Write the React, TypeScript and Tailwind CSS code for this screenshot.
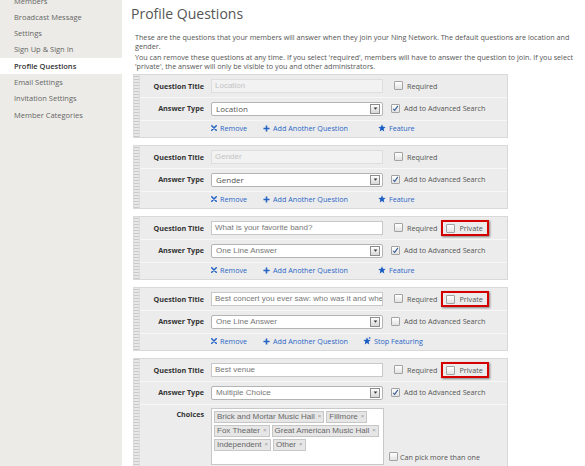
import React from 'react';

const ui = "font-['Open_Sans','DejaVu_Sans',sans-serif]";
const arial = "font-['Liberation_Sans',Arial,sans-serif]";

const nav = [
  'Members',
  'Broadcast Message',
  'Settings',
  'Sign Up & Sign In',
  'Profile Questions',
  'Email Settings',
  'Invitation Settings',
  'Member Categories',
];

type Question = {
  title: string;
  locked?: boolean;
  answer: string;
  search: boolean;
  priv?: boolean;
  featured?: boolean;
  choices?: string[];
};

const questions: Question[] = [
  { title: 'Location', locked: true, answer: 'Location', search: true },
  { title: 'Gender', locked: true, answer: 'Gender', search: true },
  { title: 'What is your favorite band?', answer: 'One Line Answer', search: true, priv: true },
  {
    title: 'Best concert you ever saw: who was it and where',
    answer: 'One Line Answer',
    search: false,
    priv: true,
    featured: true,
  },
  {
    title: 'Best venue',
    answer: 'Multiple Choice',
    search: true,
    priv: true,
    choices: [
      'Brick and Mortar Music Hall',
      'Fillmore',
      'Fox Theater',
      'Great American Music Hall',
      'Independent',
      'Other',
    ],
  },
];

function Check({ checked }: { checked?: boolean }) {
  return (
    <span className="inline-flex h-[9px] w-[9px] shrink-0 items-center justify-center rounded-[1px] border border-[#a3a3a3] bg-gradient-to-b from-white to-[#e2e2e2]">
      {checked && (
        <svg viewBox="0 0 8 8" className="h-[7px] w-[7px]">
          <path d="M1.4 4.3 3.1 6.2 6.7 1" fill="none" stroke="#3b5f95" strokeWidth="1.3" />
        </svg>
      )}
    </span>
  );
}

function XIcon() {
  return (
    <svg viewBox="0 0 8 8" className="h-[6px] w-[6px]">
      <path d="M1 1 7 7M7 1 1 7" stroke="#2563c4" strokeWidth="2" strokeLinecap="round" />
    </svg>
  );
}

function PlusIcon() {
  return (
    <svg viewBox="0 0 8 8" className="h-[7px] w-[7px]">
      <path d="M4 0.5v7M0.5 4h7" stroke="#2563c4" strokeWidth="1.8" />
    </svg>
  );
}

function StarIcon({ sparkle }: { sparkle?: boolean }) {
  return (
    <svg viewBox="0 0 10 10" className="h-[8px] w-[8px]">
      <path
        d="M5 0.4 6.3 3.5 9.6 3.7 7.1 5.9 7.9 9.3 5 7.5 2.1 9.3 2.9 5.9 0.4 3.7 3.7 3.5Z"
        fill="#1f5fc4"
      />
      {sparkle && <path d="M8.3 0v2.4M7.1 1.2h2.4" stroke="#1f5fc4" strokeWidth="0.8" />}
    </svg>
  );
}

function Select({ value, plain }: { value: string; plain?: boolean }) {
  return (
    <div className="flex h-[14px] w-[172px] items-center justify-between rounded-[2px] border border-[#b4b4b4] bg-white pl-[4px] pr-[2px]">
      <span className={`${plain ? ui : arial} text-[8px] ${plain ? 'text-[#555]' : 'text-[#777]'}`}>{value}</span>
      <span className="flex h-[10px] w-[10px] items-center justify-center border border-[#8d8d8d] bg-gradient-to-b from-white to-[#d6d6d6]">
        <svg viewBox="0 0 6 4" className="h-[3px] w-[5px]">
          <path d="M0.5 0.5h5L3 3.5Z" fill="#333" />
        </svg>
      </span>
    </div>
  );
}

function QuestionBox({ q }: { q: Question }) {
  return (
    <div className="flex w-[375px] border border-[#d9d9d9] bg-[#ececec]">
      <div className="w-[6px] shrink-0 border-r border-[#dcdcdc] bg-[repeating-linear-gradient(0deg,#c9c9c9_0_1px,#e8e8e8_1px_3px)]" />
      <div className="flex-1">
        <div className="flex h-[22px] items-center">
          <div className="w-[64px] text-right text-[7.2px] font-bold text-[#333]">Question Title</div>
          <div
            className={`ml-[7px] flex h-[14px] w-[172px] items-center overflow-hidden whitespace-nowrap border pl-[3px] ${arial} text-[8px] ${
              q.locked ? 'border-[#dedede] bg-[#f2f2f2] text-[#c4c4c4]' : 'border-[#c8c8c8] bg-white text-[#777]'
            }`}
          >
            {q.title}
          </div>
          <div className="ml-[11px] flex items-center gap-[4px]">
            <Check />
            <span className="text-[7.2px] text-[#555]">Required</span>
          </div>
          {q.priv && (
            <div className="ml-[4px] flex h-[16px] items-center gap-[4px] border-[2.5px] border-[#d40000] pl-[3px] pr-[4px] shadow-[1px_1px_2px_rgba(0,0,0,0.45)]">
              <Check />
              <span className="text-[7.2px] text-[#555]">Private</span>
            </div>
          )}
        </div>
        <div className="flex h-[22.5px] items-center border-t border-[#f7f7f7]">
          <div className="w-[64px] text-right text-[7.2px] font-bold text-[#333]">Answer Type</div>
          <div className="ml-[7px]">
            <Select value={q.answer} plain={q.locked} />
          </div>
          <div className="ml-[8px] flex items-center gap-[4px]">
            <Check checked={q.search} />
            <span className="text-[7.2px] text-[#555]">Add to Advanced Search</span>
          </div>
        </div>
        {q.choices ? (
          <div className="flex h-[70px] items-start border-t border-[#f7f7f7] pt-[3px]">
            <div className="w-[64px] pt-[1px] text-right text-[7.2px] font-bold text-[#333]">Choices</div>
            <div className={`ml-[7px] flex h-[57px] w-[173px] flex-wrap content-start gap-[2px] border border-[#c8c8c8] bg-white p-[2px] ${arial}`}>
              {q.choices.map((c) => (
                <span
                  key={c}
                  className="flex h-[12px] items-center gap-[3px] border border-[#c6c6c6] bg-[#e6e6e6] px-[2px] text-[8px] text-[#666]"
                >
                  {c}
                  <span className="text-[6px] text-[#999]">×</span>
                </span>
              ))}
            </div>
            <div className="ml-[5px] mt-[44px] flex items-center gap-[2px]">
              <Check />
              <span className="text-[7.2px] text-[#555]">Can pick more than one</span>
            </div>
          </div>
        ) : (
          <div className="flex h-[17px] items-center border-t border-[#f7f7f7] pl-[71px] text-[7.2px] text-[#2a66c6]">
            <span className="flex items-center gap-[3px]">
              <XIcon />
              Remove
            </span>
            <span className="ml-[16px] flex items-center gap-[3px]">
              <PlusIcon />
              Add Another Question
            </span>
            {q.featured ? (
              <span className="ml-[15px] flex items-center gap-[3px]">
                <StarIcon sparkle />
                Stop Featuring
              </span>
            ) : (
              <span className="ml-[30px] flex items-center gap-[3px]">
                <StarIcon />
                Feature
              </span>
            )}
          </div>
        )}
      </div>
    </div>
  );
}

export default function App() {
  return (
    <div className={`flex h-[466px] w-[585px] overflow-hidden bg-white ${ui}`}>
      <aside className="w-[122px] shrink-0 bg-[#ecebe7]">
        <ul className="mt-[-7px]">
          {nav.map((item) => (
            <li
              key={item}
              className={`flex h-[16.3px] items-center pl-[14px] text-[7.5px] ${
                item === 'Profile Questions' ? 'bg-white font-semibold text-[#333]' : 'text-[#666]'
              }`}
            >
              {item}
            </li>
          ))}
        </ul>
      </aside>
      <main className="flex-1">
        <h1 className="ml-[9px] mt-[6px] text-[14px] leading-[16px] text-[#555]">Profile Questions</h1>
        <div className="ml-[13px] mr-[4px] mt-[11px] text-[7.2px] leading-[9px] text-[#555]">
          <p>
            These are the questions that your members will answer when they join your Ning Network. The default
            questions are location and gender.
          </p>
          <p className="mt-[2px]">
            You can remove these questions at any time. If you select 'required', members will have to answer the
            question to join. If you select 'private', the answer will only be visible to you and other administrators.
          </p>
        </div>
        <div className="ml-[11px] mt-[3px] flex flex-col gap-[7.5px]">
          {questions.map((q) => (
            <QuestionBox key={q.title} q={q} />
          ))}
        </div>
      </main>
    </div>
  );
}
